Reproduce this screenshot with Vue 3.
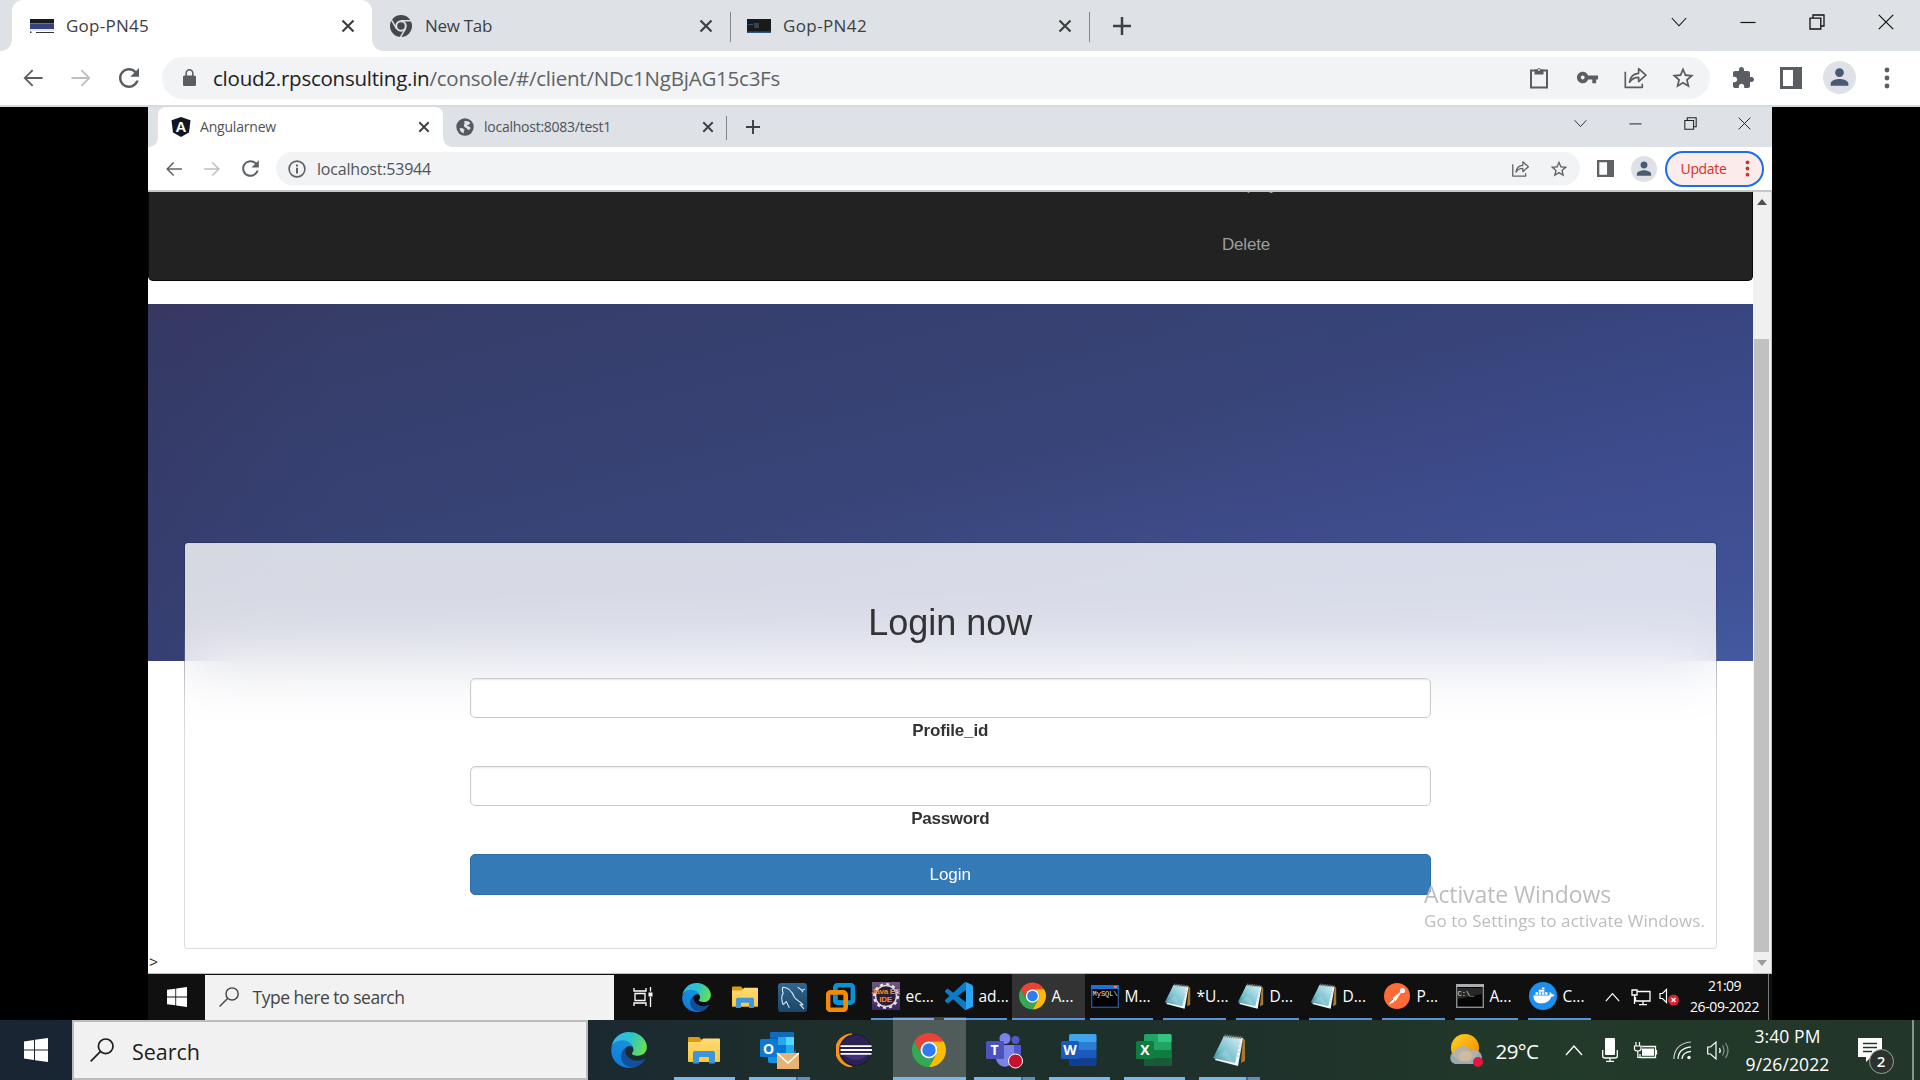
<script setup>
// Adjusts tracking so that a label fills the given width in pixels.
const vFit = {
  mounted(el, { value }) {
    const width = el.getBoundingClientRect().width
    el.style.letterSpacing = `${(value - width) / el.textContent.length}px`
  },
}

const pinned = [
  { icon: 'edge', size: 36 },
  { icon: 'folder', size: 32, run: true },
  { icon: 'outlook', size: 39, run: true, stack: true, letter: 'O' },
  { icon: 'eclipse', size: 36 },
  { icon: 'chrome', size: 34, active: true },
  { icon: 'teams', size: 37, run: true, stack: true, letter: 'T' },
  { icon: 'word', size: 36, run: true, letter: 'W' },
  { icon: 'excel', size: 36, run: true, letter: 'X' },
  { icon: 'notepad', size: 34, run: true, stack: true },
]

const remotePinned = ['edge', 'folder', 'mysql', 'vmware']

const remoteTasks = [
  { icon: 'javaee', label: 'ec...', lines: ['Java EE', 'IDE'] },
  { icon: 'vscode', label: 'ad...' },
  { icon: 'chrome', label: 'A...', active: true },
  { icon: 'mysqlcmd', label: 'M...', lines: ['MySQL\\'] },
  { icon: 'notepad', label: '*U...' },
  { icon: 'notepad', label: 'D...' },
  { icon: 'notepad', label: 'D...' },
  { icon: 'postman', label: 'P...' },
  { icon: 'cmd', label: 'A...', lines: ['C:\\_'] },
  { icon: 'docker', label: 'C...' },
]
</script>

<template>
  <div class="screen">
    <svg class="defs" width="0" height="0" aria-hidden="true">
      <defs>
        <linearGradient id="gEdgeA" x1="0" y1="0.3" x2="1" y2="0.6"><stop offset="0" stop-color="#35b8f2" /><stop offset=".5" stop-color="#2cc3c9" /><stop offset="1" stop-color="#6be24a" /></linearGradient>
        <linearGradient id="gEdgeB" x1="0.6" y1="0" x2="0.3" y2="1"><stop offset="0" stop-color="#1b8fe0" /><stop offset="1" stop-color="#0f7bd8" /></linearGradient>
        <linearGradient id="gPad" x1="0" y1="1" x2="1" y2="0"><stop offset="0" stop-color="#1f6d80" /><stop offset=".35" stop-color="#6fbccb" /><stop offset="1" stop-color="#d9f1f5" /></linearGradient>
        <linearGradient id="gFold" x1="0" y1="0" x2="0" y2="1"><stop offset="0" stop-color="#ffdc78" /><stop offset="1" stop-color="#fcc63a" /></linearGradient>
        <linearGradient id="gSun" x1="0" y1="0" x2="1" y2="1"><stop offset="0" stop-color="#ffd21f" /><stop offset="1" stop-color="#f28500" /></linearGradient>
        <linearGradient id="gJava" x1="0" y1="0" x2="0" y2="1"><stop offset="0" stop-color="#6e5876" /><stop offset="1" stop-color="#3d2465" /></linearGradient>
        <linearGradient id="gSql" x1="0" y1="0" x2="0" y2="1"><stop offset="0" stop-color="#2f668f" /><stop offset="1" stop-color="#1c4668" /></linearGradient>
      </defs>
      <symbol id="back" viewBox="0 0 24 24"><path d="M21.500 11.100H6l6.300-6.300L11 3.500 2.500 12l8.500 8.500 1.300-1.300L6 12.900h15.500z" /></symbol>
      <symbol id="fwd" viewBox="0 0 24 24"><path d="M2.500 11.100H18l-6.300-6.300L13 3.500l8.500 8.500-8.500 8.500-1.300-1.300 6.300-6.300H2.500z" /></symbol>
      <symbol id="reload" viewBox="0 0 24 24"><path d="M17.650 6.350C16.200 4.900 14.210 4 12 4c-4.420 0-7.990 3.580-7.990 8s3.570 8 7.990 8c3.730 0 6.840-2.550 7.730-6h-2.080c-.82 2.330-3.040 4-5.650 4-3.310 0-6-2.690-6-6s2.690-6 6-6c1.660 0 3.140.69 4.220 1.780L13 11h7V4l-2.350 2.350z" /></symbol>
      <symbol id="star" viewBox="0 0 24 24"><path d="M22 9.240l-7.190-.62L12 2 9.190 8.630 2 9.240l5.460 4.730L5.820 21 12 17.270 18.180 21l-1.630-7.030L22 9.240zM12 15.400l-3.760 2.270 1-4.280-3.320-2.880 4.380-.38L12 6.100l1.710 4.040 4.380.38-3.320 2.880 1 4.280L12 15.400z" /></symbol>
      <symbol id="share" viewBox="0 0 24 24"><path d="M2.200 6.500V21.500H18.500V18M6.300 16.500C7 11 10 8.300 15 8V3.500L22 9.800L15 16V11.800C11 11.800 8.500 13 6.300 16.500z" fill="none" stroke="currentColor" stroke-width="1.600" stroke-linejoin="round" /></symbol>
      <symbol id="panel" viewBox="0 0 22 22"><path d="M0 0H22V22H0zM3 3V19H13V3z" fill-rule="evenodd" /></symbol>
      <symbol id="person" viewBox="0 0 24 24"><path d="M12 11.500c2.400 0 4.200-1.900 4.200-4.300S14.400 3 12 3 7.800 4.800 7.800 7.200 9.600 11.500 12 11.500zm0 2c-2.800 0-8.500 1.400-8.500 4.300V20h17v-2.200c0-2.900-5.700-4.300-8.500-4.300z" /></symbol>
      <symbol id="cross" viewBox="0 0 14 14"><path d="M1.500 1.500L12.500 12.500M12.500 1.500L1.500 12.500" stroke="currentColor" stroke-width="2.200" /></symbol>
      <symbol id="plus" viewBox="0 0 18 18"><path d="M9 0V18M0 9H18" stroke="currentColor" stroke-width="2.500" /></symbol>
      <symbol id="wdown" viewBox="0 0 16 16"><path d="M.8 4L8 11.800 15.200 4" fill="none" stroke="currentColor" stroke-width="1.100" /></symbol>
      <symbol id="wmin" viewBox="0 0 16 16"><path d="M.5 8.500H15.500" stroke="currentColor" stroke-width="1.200" /></symbol>
      <symbol id="wmax" viewBox="0 0 16 16"><path d="M1 4.200H11.800V15H1zM4 4V1H15V12H12" fill="none" stroke="currentColor" stroke-width="1.300" /></symbol>
      <symbol id="wclose" viewBox="0 0 16 16"><path d="M.8 .8L15.200 15.200M15.200 .8L.8 15.200" stroke="currentColor" stroke-width="1.200" /></symbol>
      <symbol id="win" viewBox="0 0 24 24"><path d="M0 3.400L10 2V11.500H0zM11 1.800L24 0V11.500H11zM0 12.500H10V22L0 20.600zM11 12.500H24V24L11 22.200z" fill="#fff" /></symbol>
      <symbol id="find" viewBox="0 0 24 24"><g fill="none" stroke="currentColor" stroke-width="1.700"><circle cx="15.700" cy="8.300" r="7.300" /><path d="M10.300 13.700L.7 23.300" /></g></symbol>
      <symbol id="up" viewBox="0 0 18 12"><path d="M1 11L9 2L17 11" fill="none" stroke="currentColor" stroke-width="1.400" /></symbol>

      <symbol id="edge" viewBox="0 0 256 259">
        <path fill="#114f9b" d="M235.680 195.460a93.730 93.730 0 01-10.540 4.710 101.870 101.870 0 01-35.900 6.460c-47.320 0-88.540-32.550-88.540-74.320A31.480 31.480 0 01117.130 105c-42.800 1.800-53.800 46.400-53.800 72.530 0 73.880 68.090 81.370 82.760 81.370 7.910 0 19.840-2.300 27-4.560l1.310-.44a128.340 128.340 0 0066.600-52.800 4 4 0 00-5.320-5.640z" />
        <path fill="url(#gEdgeB)" d="M105.730 241.420A79.200 79.200 0 0183 220.080 80.720 80.720 0 01117.130 105c3.370-1.600 9-4.410 16.500-4.260a32.400 32.400 0 0125.690 13 31.880 31.880 0 016.360 18.660c0-.21 24.500-79.660-80.130-79.660C41.500 52.700 0 94.500 0 131.100a130.200 130.200 0 0012.100 56 128.200 128.200 0 00156.400 62.400 75.500 75.500 0 01-62.770-8.080z" />
        <path fill="url(#gEdgeA)" d="M152.330 148.860c-.81 1.050-3.300 2.500-3.300 5.660 0 2.610 1.700 5.120 4.720 7.230 14.380 10 41.490 8.680 41.560 8.680a59.560 59.560 0 0030.270-8.350 61.380 61.380 0 0030.430-52.880c.26-22.410-8-37.310-11.340-43.910C223.460 23.840 177.720 0 128 0A128 128 0 000 126.200c.48-36.540 36.800-66.050 80-66.050 3.500 0 23.460.34 42 10.070 16.340 8.580 24.900 18.940 30.850 29.210 6.180 10.670 7.280 24.150 7.280 29.520s-2.740 13.330-7.800 19.910z" />
      </symbol>
      <symbol id="folder" viewBox="0 0 32 32">
        <path d="M0 4Q0 3 1 3H11L14 6V10H0z" fill="#dc9a0c" /><path d="M0 8H12L15 4.500H31Q32 4.500 32 5.500V27Q32 28 31 28H1Q0 28 0 27z" fill="url(#gFold)" />
        <path d="M5 29.500V19Q5 17 7 17H25Q27 17 27 19V29.500H21V23H11V29.500z" fill="#3a96dd" />
      </symbol>
      <symbol id="chrome" viewBox="2 2 44 44">
        <path fill="#ea4335" d="M4.950 13A22 22 0 0143.050 13H24A11 11 0 0014.470 29.500z" />
        <path fill="#fbbc04" d="M43.050 13A22 22 0 0124 46L33.530 29.500A11 11 0 0024 13z" />
        <path fill="#34a853" d="M24 46A22 22 0 014.950 13L14.470 29.500A11 11 0 0033.530 29.500z" />
        <circle cx="24" cy="24" r="11" fill="#fff" /><circle cx="24" cy="24" r="8.700" fill="#2f7cf0" />
      </symbol>
      <symbol id="chromegray" viewBox="2 2 44 44">
        <circle cx="24" cy="24" r="22" fill="#45484c" />
        <path d="M24 13.500H45M14.900 29.200L4.500 11M33.100 29.200L22.500 47" stroke="#dee1e6" stroke-width="3" /><circle cx="24" cy="24" r="11.500" fill="#dee1e6" /><circle cx="24" cy="24" r="7.500" fill="#45484c" />
      </symbol>
      <symbol id="notepad" viewBox="0 0 34 34">
        <path d="M31 5L33 7V28L29 30z" fill="#a87730" /><path d="M12 3L31 5 26 33 3 27z" fill="#f4f8f9" /><path d="M12 3L29 5 23 30 1 25z" fill="url(#gPad)" /><path d="M1 25L14 17 23 30z" fill="#fff" opacity=".18" />
        <path d="M12.500 2.800L30.500 4.800" stroke="#777" stroke-width="3" stroke-dasharray="1.200 1" />
        <path d="M27 11H30M26 15H29.500M25.500 19H28.800M25 23H28" stroke="#b7c5c9" stroke-width=".8" />
      </symbol>
      <symbol id="outlook" viewBox="0 0 39 39">
        <path d="M10 2Q10 1 11 1H33Q34 1 34 2V21L36 18V31H10z" fill="#0f6cbd" /><path d="M10 6H18V14H10z" fill="#0364b8" /><path d="M18 6H26V14H18z" fill="#28a8ea" /><path d="M26 6H34V14H26z" fill="#50d9ff" /><path d="M18 14H26V22H18z" fill="#0078d4" /><path d="M26 14H34V22H26z" fill="#28a8ea" /><path d="M8 22H35V32H10Q8 32 8 30z" fill="#1490df" />
        <rect x="0" y="8" width="18" height="18" rx="1.500" fill="#0f78d4" />
        <rect x="17" y="22" width="22" height="16" fill="#e8b273" /><path d="M17 22L28 32 39 22" fill="none" stroke="#fff" stroke-width="1.600" />
      </symbol>
      <symbol id="eclipse" viewBox="0 0 36 36">
        <path d="M16 2A16.500 16.500 0 0016 34.500 16 16 0 0116 2z" fill="#f7941e" stroke="#f7941e" stroke-width="1.200" /><circle cx="20" cy="18" r="15.500" fill="#2c2255" stroke="#111" stroke-width=".6" />
        <path d="M9 23H31A12 8 0 019 23z" fill="#4a3a8c" opacity=".7" /><path d="M4.500 14.200H35.500M4.500 18H36M4.500 21.800H35.500" stroke="#fff" stroke-width="1.800" />
      </symbol>
      <symbol id="teams" viewBox="0 0 37 37">
        <circle cx="19" cy="6.500" r="5.500" fill="#7b83eb" /><circle cx="29.500" cy="8" r="4" fill="#5059c9" /><path d="M25 13H35V24A5 5 0 0125 27z" fill="#5059c9" /><path d="M10 13H28V24A9 9 0 0110 27z" fill="#7b83eb" />
        <rect y="9" width="18" height="18" rx="1.500" fill="#4b53bc" />
        <circle cx="29.500" cy="29" r="7" fill="#c4122f" stroke="#fff" stroke-width="1" />
      </symbol>
      <symbol id="word" viewBox="0 0 36 36">
        <path d="M8 9V3.500Q8 2 9.500 2H34Q35.500 2 35.500 3.500V10H8z" fill="#41a5ee" /><path d="M8 10H35.500V18H8z" fill="#2b7cd3" /><path d="M8 18H35.500V26H8z" fill="#185abd" /><path d="M8 26H35.500V32.500Q35.500 34 34 34H9.500Q8 34 8 32.500z" fill="#103f91" />
        <rect y="9" width="18" height="18" rx="1.500" fill="#185abd" />
      </symbol>
      <symbol id="excel" viewBox="0 0 36 36">
        <rect x="8" y="2" width="27.500" height="32" rx="1.500" fill="#21a366" /><path d="M22 2H34Q35.500 2 35.500 3.500V10H22z" fill="#33c481" /><path d="M8 18H22V26H8z" fill="#107c41" /><path d="M22 18H35.500V26H22z" fill="#107c41" /><path d="M8 26H35.500V32.500Q35.500 34 34 34H9.500Q8 34 8 32.500z" fill="#185c37" />
        <rect y="9" width="18" height="18" rx="1.500" fill="#107c41" />
      </symbol>
      <symbol id="mysql" viewBox="0 0 28 28"><rect width="28" height="28" rx="3" fill="url(#gSql)" /><path d="M5 21C3 16 3.500 12 5 10 4 7 4 5 5 4 11 4 14 9 16 14 18 17 22 18 24 21L21.500 21 25 25M5 21L8 18 11 24M19 4L23 7 26 6M23 7L24 9" fill="none" stroke="#e8f0f5" stroke-width="1" /></symbol>
      <symbol id="vmware" viewBox="0 0 28 28"><rect x="9" y="2" width="17" height="17" rx="2.500" fill="none" stroke="#0a93d4" stroke-width="4.500" /><rect x="2" y="9" width="17" height="17" rx="2.500" fill="none" stroke="#f38b00" stroke-width="4.500" /><path d="M9 12V16.500Q9 19 11.500 19H16" fill="none" stroke="#0a93d4" stroke-width="4.500" /></symbol>
      <symbol id="javaee" viewBox="0 0 28 28"><rect width="28" height="28" fill="url(#gJava)" /><circle cx="14" cy="14" r="11.500" fill="none" stroke="#e6e3ea" stroke-width="3" stroke-dasharray="3 3" /><circle cx="14" cy="14" r="10.500" fill="#2b1d33" stroke="#d8d3dd" stroke-width="1.500" /></symbol>
      <symbol id="vscode" viewBox="0 0 24 24"><path fill="#0a7bc4" d="M23.150 2.587L18.210.21a1.494 1.494 0 0 0-1.705.29l-9.460 8.630-4.120-3.128a.999.999 0 0 0-1.276.057L.327 7.261A1 1 0 0 0 .326 8.740L3.899 12 .326 15.260a1 1 0 0 0 .001 1.479L1.650 17.940a.999.999 0 0 0 1.276.057l4.120-3.128 9.460 8.630a1.492 1.492 0 0 0 1.704.29l4.942-2.377A1.500 1.500 0 0 0 24 20.060V3.939a1.500 1.500 0 0 0-.85-1.352zm-5.146 14.861L10.826 12l7.178-5.448v10.896z" /><path d="M18 .2L23.150 2.600Q24 3 24 3.940V20.060Q24 21 23.150 21.400L18 23.800z" fill="#2aa5f2" /></symbol>
      <symbol id="mysqlcmd" viewBox="0 0 28 28"><rect x=".7" y="3.700" width="26.600" height="21.600" fill="#000" stroke="#23509a" stroke-width="1.400" /><path d="M0 3H28V7H0z" fill="#1d72d8" /><path d="M23 4H26V6H23z" fill="#e37b70" /></symbol>
      <symbol id="postman" viewBox="0 0 28 28"><circle cx="14" cy="14" r="13" fill="#ff6c37" /><circle cx="19.500" cy="8.500" r="2.600" fill="#fff" /><path d="M18 10L10 16 12.500 18.500zM11 17L6 22 11 19.500z" fill="#fff" stroke="#fff" stroke-width="1" /></symbol>
      <symbol id="cmd" viewBox="0 0 28 28"><rect x=".7" y="2.700" width="26.600" height="22.600" fill="#050505" stroke="#8b8f91" stroke-width="1.400" /><path d="M0 2H28V5H0z" fill="#a9adaf" /><path d="M2 6H26V12L2 17z" fill="#fff" opacity=".14" /></symbol>
      <symbol id="docker" viewBox="0 0 28 28"><circle cx="14" cy="14" r="14" fill="#1d8fee" /><path d="M4.500 13.500H19.500C20.500 13.500 21 11.500 20.500 10.200 22 10.500 22.700 11.500 22.800 12.300 24 12 25 12.300 25.500 12.700 25 14.300 23.500 14.800 22.300 14.700 20.500 19.500 17 21.300 12 21.300 6.500 21.300 4.300 18 4.500 13.500z" fill="#fff" /><path d="M6.500 10.300H9V12.700H6.500zM9.700 10.300H12.200V12.700H9.700zM12.900 10.300H15.400V12.700H12.900zM16.100 10.300H18.600V12.700H16.100zM9.700 7.700H15.400V9.700H9.700zM12.900 5.500H15.400V7.200H12.900z" fill="#fff" /></symbol>
    </svg>

    <!-- Outer browser -->
    <div class="tabs">
      <div class="tab tab-on">
        <svg class="fav" width="24" height="14" viewBox="0 0 24 14"><path d="M0 0H24V4H0z" fill="#191a1c" /><path d="M0 4H24V5H0z" fill="#6d7184" /><path d="M0 5H24V10H0z" fill="#36427c" /><path d="M0 10H24V12H0z" fill="#e4e6ee" /><path d="M0 12.500H1.500V14H0zM6 13H24V14H6z" fill="#333" /></svg>
        <span class="tab-t"><span v-fit="83">Gop-PN45</span></span>
        <svg class="x" width="14" height="14"><use href="#cross" /></svg>
      </div>
      <div class="tab tab-two">
        <svg width="22" height="22"><use href="#chromegray" /></svg>
        <span class="tab-t new"><span v-fit="67">New Tab</span></span>
        <svg class="x" width="14" height="14"><use href="#cross" /></svg>
      </div>
      <div class="tab tab-three">
        <svg class="fav" width="24" height="14" viewBox="0 0 24 14"><path d="M0 0H24V14H0z" fill="#191a1c" /><path d="M1 5H6V6H1z" fill="#24567f" /><path d="M7 4H12V9H7z" fill="#3d414c" /><path d="M0 12.500H24V14H0z" fill="#2d5a7c" /></svg>
        <span class="tab-t"><span v-fit="84">Gop-PN42</span></span>
        <svg class="x" width="14" height="14"><use href="#cross" /></svg>
      </div>
      <svg class="plus" width="18" height="18"><use href="#plus" /></svg>
      <div class="wins">
        <svg v-for="w in ['wdown', 'wmin', 'wmax', 'wclose']" :key="w" width="16" height="16"><use :href="'#' + w" /></svg>
      </div>
    </div>

    <div class="bar">
      <div class="slot"><svg width="24" height="24"><use href="#back" /></svg></div>
      <div class="slot dim"><svg width="24" height="24"><use href="#fwd" /></svg></div>
      <div class="slot"><svg width="30" height="30"><use href="#reload" /></svg></div>
      <div class="omni">
        <svg class="lock" width="13" height="17" viewBox="4 1 16 21" preserveAspectRatio="none"><path d="M18 9h-1V6c0-2.760-2.240-5-5-5S7 3.240 7 6v3H6c-1.100 0-2 .9-2 2v9c0 1.100.9 2 2 2h12c1.100 0 2-.9 2-2v-9c0-1.100-.9-2-2-2zM15.100 9H8.900V6c0-1.710 1.390-3.100 3.100-3.100s3.100 1.390 3.100 3.100z" /></svg>
        <span class="url"><span v-fit="567"><b>cloud2.rpsconsulting.in</b>/console/#/client/NDc1NgBjAG15c3Fs</span></span>
        <div class="slot"><svg width="20" height="22" viewBox="0 0 20 22"><path d="M2 3.500H18V20.500H2z" fill="none" stroke="currentColor" stroke-width="2" /><path d="M5.500 2.500H8A2.200 2.200 0 0112 2.500H14.500V7.500H5.500z" /><circle cx="10" cy="3" r=".9" fill="#fff" /></svg></div>
        <div class="slot"><svg width="23" height="23" viewBox="0 0 24 24"><path d="M12.650 10C11.830 7.670 9.610 6 7 6c-3.310 0-6 2.690-6 6s2.690 6 6 6c2.610 0 4.830-1.670 5.650-4H17v4h4v-4h2v-4H12.650zM7 14c-1.100 0-2-.9-2-2s.9-2 2-2 2 .9 2 2-.9 2-2 2z" /></svg></div>
        <div class="slot"><svg width="25" height="25"><use href="#share" /></svg></div>
        <div class="slot"><svg width="26" height="26"><use href="#star" /></svg></div>
      </div>
      <div class="slot ext"><svg width="24" height="24" viewBox="0 0 24 24"><path d="M20.500 11H19V7c0-1.100-.9-2-2-2h-4V3.500C13 2.120 11.880 1 10.500 1S8 2.120 8 3.500V5H4c-1.100 0-1.990.9-1.990 2v3.800H3.500c1.490 0 2.700 1.210 2.700 2.700s-1.210 2.700-2.700 2.700H2V20c0 1.100.9 2 2 2h3.800v-1.500c0-1.490 1.210-2.700 2.700-2.700 1.490 0 2.700 1.210 2.700 2.700V22H17c1.100 0 2-.9 2-2v-4h1.500c1.380 0 2.500-1.120 2.500-2.500S21.880 11 20.500 11z" /></svg></div>
      <div class="slot"><svg width="22" height="22"><use href="#panel" /></svg></div>
      <div class="slot"><span class="face"><svg width="25" height="25"><use href="#person" /></svg></span></div>
      <div class="slot"><svg width="6" height="22" viewBox="0 0 6 22"><circle cx="3" cy="3" r="2.400" /><circle cx="3" cy="11" r="2.400" /><circle cx="3" cy="19" r="2.400" /></svg></div>
    </div>

    <!-- Remote desktop -->
    <main class="stage">
      <div class="remote">
        <div class="rtabs">
          <div class="rtab rtab-on">
            <span class="ng"><svg width="20" height="20" viewBox="0 0 20 20"><path d="M10 0L19.500 3.300 18 15.500 10 20 2 15.500 .5 3.300z" fill="#101722" /><text x="10" y="15" text-anchor="middle" font-family="Liberation Sans, sans-serif" font-weight="700" font-size="15" fill="#fff">A</text></svg></span>
            <span class="rtab-t"><span v-fit="76">Angularnew</span></span>
            <svg class="x" width="12" height="12"><use href="#cross" /></svg>
          </div>
          <div class="rtab rtab-two">
            <svg width="18" height="18" viewBox="0 0 18 18"><circle cx="9" cy="9" r="8.700" fill="#56595d" /><path d="M3.500 10.500C5.500 9.500 7 10 8.200 11.500 9 13 7 13.500 8 15.500 5.500 14.800 3.800 13 3.500 10.500zM8 3.500C11 2.500 13 3.500 14.500 5 13.500 7 11.500 6.500 11 8 13 8 15 9 14.500 10.500 13.500 12.500 11 12 11 10.500 10 9.500 8.500 9.500 8 8 7.500 6.500 9.500 5.500 8 3.500z" fill="#dee1e6" /></svg>
            <span class="rtab-t"><span v-fit="127">localhost:8083/test1</span></span>
            <svg class="x" width="12" height="12"><use href="#cross" /></svg>
          </div>
          <svg class="rplus" width="14" height="14"><use href="#plus" /></svg>
          <div class="rwins">
            <svg v-for="w in ['wdown', 'wmin', 'wmax', 'wclose']" :key="w" width="13" height="13"><use :href="'#' + w" /></svg>
          </div>
        </div>

        <div class="rbar">
          <div class="rslot"><svg width="20" height="20"><use href="#back" /></svg></div>
          <div class="rslot dim"><svg width="20" height="20"><use href="#fwd" /></svg></div>
          <div class="rslot"><svg width="25" height="25"><use href="#reload" /></svg></div>
          <div class="romni">
            <svg width="18" height="18" viewBox="0 0 18 18"><circle cx="9" cy="9" r="7.900" fill="none" stroke="currentColor" stroke-width="1.600" /><path d="M8 7.800H10V13.500H8zM8 4.500H10V6.400H8z" /></svg>
            <span class="rurl"><span v-fit="114">localhost:53944</span></span>
            <div class="rslot"><svg width="19" height="19"><use href="#share" /></svg></div>
            <div class="rslot"><svg width="20" height="20"><use href="#star" /></svg></div>
          </div>
          <div class="rslot rfirst"><svg width="17" height="17"><use href="#panel" /></svg></div>
          <div class="rslot"><span class="face small"><svg width="20" height="20"><use href="#person" /></svg></span></div>
          <div class="update"><span v-fit="46">Update</span><svg width="5" height="17" viewBox="0 0 5 17"><circle cx="2.500" cy="2.300" r="1.900" /><circle cx="2.500" cy="8.500" r="1.900" /><circle cx="2.500" cy="14.700" r="1.900" /></svg></div>
        </div>

        <div class="view">
          <div class="page">
            <nav class="nav"><a>Display</a><a><span v-fit="48">Delete</span></a></nav>
            <div class="hero"></div>
            <section class="card">
              <h2>Login now</h2>
              <div class="field"></div>
              <label><span v-fit="76">Profile_id</span></label>
              <div class="field"></div>
              <label><span v-fit="78">Password</span></label>
              <button>Login</button>
            </section>
            <span class="gt">&gt;</span>
          </div>
          <div class="scroll">
            <svg width="10" height="6" viewBox="0 0 10 6"><path d="M0 6L5 0 10 6z" fill="#505050" /></svg>
            <div class="thumb"></div>
            <svg class="dn" width="10" height="6" viewBox="0 0 10 6"><path d="M0 0L5 6 10 0z" fill="#9c9c9c" /></svg>
          </div>
          <div class="mark">
            <p class="m1"><span v-fit="187">Activate Windows</span></p>
            <p class="m2"><span v-fit="281">Go to Settings to activate Windows.</span></p>
          </div>
        </div>

        <div class="rtask">
          <div class="rstart"><svg width="20" height="20"><use href="#win" /></svg></div>
          <div class="rsearch"><svg width="20" height="20"><use href="#find" /></svg><span v-fit="152">Type here to search</span></div>
          <div class="rview"><svg width="20" height="20" viewBox="0 0 20 20"><path d="M1 1V4H13V1M1 19V16H13V19M2 6.500H12V13.500H2zM17.500 0V4.500M17.500 10V20" fill="none" stroke="#fff" stroke-width="1.300" /><path d="M15.500 5.500H19.500V9.500H15.500z" fill="#fff" /></svg></div>
          <div v-for="i in remotePinned" :key="i" class="rpin"><svg :width="i === 'folder' ? 26 : 29" :height="i === 'folder' ? 26 : 29"><use :href="'#' + i" /></svg></div>
          <div class="rruns">
            <div v-for="(t, n) in remoteTasks" :key="n" class="rrun" :class="{ on: t.active }">
              <div class="rin">
                <div class="ico" :class="t.icon">
                  <svg :width="t.icon === 'chrome' || t.icon === 'notepad' ? 27 : 28" height="28"><use :href="'#' + t.icon" /></svg>
                  <div v-if="t.lines" class="mini"><i v-for="l in t.lines" :key="l">{{ l }}</i></div>
                </div>
                <span>{{ t.label }}</span>
              </div>
            </div>
          </div>
          <div class="rtray">
            <svg width="15" height="10"><use href="#up" /></svg>
            <svg width="20" height="17" viewBox="0 0 20 17"><path d="M6 2.500H19V12H4.500V8M12 12V15.500M8 15.700H16M1 1H6V6H1zM3.500 6V15" fill="none" stroke="#fff" stroke-width="1.300" /></svg>
            <svg width="20" height="18" viewBox="0 0 20 18"><path d="M1 5.500H3.500L7.500 1.500V14.500L3.500 10.500H1z" fill="none" stroke="#fff" stroke-width="1.200" /><circle cx="14.500" cy="12" r="5.500" fill="#d9232e" /><path d="M12.500 10L16.500 14M16.500 10L12.500 14" stroke="#fff" stroke-width="1.400" /></svg>
            <div class="rclock"><span v-fit="33">21:09</span><span v-fit="69">26-09-2022</span></div>
          </div>
        </div>
      </div>
    </main>

    <!-- Host taskbar -->
    <footer class="task">
      <div class="start"><svg width="24" height="24"><use href="#win" /></svg></div>
      <div class="search"><svg width="24" height="24"><use href="#find" /></svg><span v-fit="68">Search</span></div>
      <div class="pins">
        <div v-for="p in pinned" :key="p.icon" class="pin" :class="{ run: p.run, stack: p.stack, on: p.active }">
          <div class="ico">
            <svg :width="p.size" :height="p.size"><use :href="'#' + p.icon" /></svg>
            <b v-if="p.letter" class="letter">{{ p.letter }}</b>
          </div>
        </div>
      </div>
      <div class="tray">
        <svg class="sun" width="36" height="34" viewBox="0 0 36 34"><circle cx="17" cy="15" r="14" fill="url(#gSun)" /><path d="M7 31A6.500 6.500 0 017 18.500 9 9 0 0123 18 7 7 0 0130 31z" fill="#a9b4c0" opacity=".9" /><path d="M10 23A8 8 0 0124 21 6 6 0 0120 28H12z" fill="#e6c092" opacity=".6" /><circle cx="30" cy="29" r="5" fill="#e3173e" /></svg>
        <span class="deg"><span v-fit="43">29°C</span></span>
        <svg class="up" width="18" height="12"><use href="#up" /></svg>
        <svg class="mic" width="16" height="24" viewBox="0 0 16 24"><rect x="3" y="0" width="10" height="17" rx="1" fill="#fff" /><path d="M.7 12V18Q.7 20 3 20H13Q15.300 20 15.300 18V12M8 20V23M4 23.300H12" fill="none" stroke="#fff" stroke-width="1.300" /></svg>
        <svg class="bat" width="24" height="17" viewBox="0 0 24 17"><path d="M8 4.500H21.500V15.500H6V12M22.500 8V12.500" fill="none" stroke="#fff" stroke-width="1.300" /><path d="M8 6.500H20V13.800H8z" fill="#fff" /><path d="M.5 4H7V7.500Q6.500 9 3.800 9 1 9 .5 7.500zM2 4V0M5.500 4V0M3.800 9V15.500H6" fill="none" stroke="#fff" stroke-width="1.200" /></svg>
        <svg class="wifi" width="19" height="19" viewBox="0 0 19 19"><g fill="none" stroke="#fff" stroke-width="1.200"><path d="M.8 18Q1.500 2.500 18 1" opacity=".75" /><path d="M5 18Q5.500 7 18 5.800" /><path d="M9 18Q9.500 11 18 10.300" /></g><circle cx="16" cy="16.500" r="1.700" fill="#fff" /></svg>
        <svg class="vol" width="23" height="19" viewBox="0 0 23 19"><path d="M.7 6H3.500L9 1V18L3.500 13H.7z" fill="none" stroke="#fff" stroke-width="1.200" /><path d="M12.500 7Q14 9.500 12.500 12" fill="none" stroke="#fff" stroke-width="1.200" /><path d="M15.500 4.500Q18.500 9.500 15.500 14.500M18.500 2Q23.500 9.500 18.500 17" fill="none" stroke="#fff" stroke-width="1.200" opacity=".45" /></svg>
        <div class="clock"><span v-fit="66">3:40 PM</span><span v-fit="84">9/26/2022</span></div>
        <div class="note"><svg width="24" height="24" viewBox="0 0 24 24"><path d="M0 0H24V19H13L8 24V19H0z" fill="#fff" /><path d="M5 5.500H19M5 9.500H19M5 13.500H14" stroke="#223629" stroke-width="1.300" /></svg><span class="num">2</span></div>
        <div class="peek"></div>
      </div>
    </footer>
  </div>
</template>

<style>
body { margin: 0; background: #000; }
</style>

<style scoped>
* { box-sizing: border-box; }
.screen { width: 1920px; height: 1080px; overflow: hidden; display: flex; flex-direction: column; font-family: "Open Sans", "Noto Sans", sans-serif; background: #000; }
.defs { position: absolute; }
svg { display: block; flex: none; fill: currentColor; overflow: visible; }
span { white-space: nowrap; }

.tabs { height: 51px; flex: none; background: #dee1e6; display: flex; align-items: center; color: #3c4043; padding-left: 12px; }
.tab { height: 51px; display: flex; align-items: center; flex: none; position: relative; }
.tab-t { font-size: 17px; margin-left: 12px; line-height: 50px; flex: 1; }
.tab-t.new { margin-left: 13px; }
.tab-on { width: 360px; padding: 0 17px 0 18px; background: #fff; border-radius: 11px 11px 0 0; }
.tab-on::before, .tab-on::after { content: ""; position: absolute; bottom: 0; width: 11px; height: 11px; }
.tab-on::before { left: -11px; background: radial-gradient(circle at 0 0, transparent 10.500px, #fff 11px); }
.tab-on::after { right: -11px; background: radial-gradient(circle at 100% 0, transparent 10.500px, #fff 11px); }
.tab-two { width: 359px; padding: 0 18px 0 18px; }
.tab-three { width: 359px; padding: 0 18px 0 16px; }
.tab-two::after, .tab-three::after { content: ""; position: absolute; right: 0; top: 12px; width: 1px; height: 30px; background: #84878b; }
.fav { margin-top: 1px; }
.plus { margin-left: 23px; }
.wins { margin-left: auto; align-self: flex-start; height: 43px; display: flex; align-items: center; color: #111; }
.wins svg { margin: 0 26.500px; }

.bar { height: 56px; flex: none; display: flex; align-items: center; padding: 0 9px 1px; background: #fff; border-bottom: 2px solid #d9dadc; color: #5a5d61; }
.slot { width: 48px; flex: none; display: flex; justify-content: center; align-items: center; }
.dim { color: #bcbec0; }
.omni { flex: 1; height: 42px; margin-left: 9px; padding: 0 3px 0 20.500px; border-radius: 21px; background: #f1f3f4; display: flex; align-items: center; }
.url { flex: 1; margin-left: 17.500px; font-size: 20.500px; line-height: 40px; color: #5f6368; }
.url b { font-weight: 400; color: #202124; }
.ext { margin-left: 9px; }
.face { width: 33px; height: 33px; border-radius: 50%; background: #dee1e6; color: #4a5a70; display: flex; align-items: center; justify-content: center; }
.face.small { width: 26px; height: 26px; }

.stage { flex: 1; min-height: 0; display: flex; padding-left: 148px; background: #000; }
.remote { width: 1623.500px; display: flex; flex-direction: column; background: #fff; }
.rtabs { height: 40px; flex: none; display: flex; align-items: center; background: #dee1e6; color: #3c4043; padding-left: 10px; }
.rtab { height: 40px; flex: none; display: flex; align-items: center; position: relative; }
.rtab-on { width: 285px; padding: 0 13px 0 13px; background: #fff; border-radius: 8px 8px 0 0; }
.rtab-on::before, .rtab-on::after { content: ""; position: absolute; bottom: 0; width: 9px; height: 9px; }
.rtab-on::before { left: -9px; background: radial-gradient(circle at 0 0, transparent 8.500px, #fff 9px); }
.rtab-on::after { right: -9px; background: radial-gradient(circle at 100% 0, transparent 8.500px, #fff 9px); }
.rtab-two { width: 284px; padding: 0 13px 0 13px; }
.rtab-two::after { content: ""; position: absolute; right: 0; top: 9px; width: 1px; height: 24px; background: #84878b; }
.rtab-t { flex: 1; margin-left: 9px; font-size: 14px; line-height: 38px; color: #505357; }
.rtab-two .rtab-t { margin-left: 10px; }
.rplus { margin-left: 19px; }
.rwins { margin-left: auto; height: 33px; align-self: flex-start; display: flex; align-items: center; color: #222; }
.rwins svg { margin: 0 20.400px 0 21.200px; }
.rbar { height: 45px; flex: none; display: flex; align-items: center; padding: 0 8px 0 7px; color: #5f6368; border-bottom: 2px solid #c6c7c9; }
.rslot { width: 38px; flex: none; display: flex; justify-content: center; }
.romni { flex: 1; height: 33px; margin-left: 7px; padding: 0 2px 0 12px; border-radius: 17px; background: #f1f3f4; display: flex; align-items: center; }
.rurl { flex: 1; margin-left: 11px; font-size: 16px; line-height: 32px; color: #505357; }
.rfirst { margin-left: 7px; }
.update { width: 99px; height: 36px; margin-left: 2px; padding: 0 12px 0 14px; border: 2.500px solid #1a6fe8; border-radius: 18px; background: #fbeceb; color: #d93025; font-size: 14px; display: flex; align-items: center; justify-content: space-between; }

.view { flex: 1; min-height: 0; display: flex; position: relative; }
.page { width: 1605px; flex: none; background: #fff; font-family: "Liberation Sans", Arial, sans-serif; position: relative; display: flex; flex-direction: column; }
.nav { height: 89px; flex: none; overflow: hidden; display: flex; flex-direction: column; justify-content: flex-end; padding: 0 0 5px 1073px; background: #222; border: 1px solid #080808; border-top: 0; border-radius: 0 0 5px 5px; color: #9d9d9d; font-size: 17px; line-height: 60px; }
.nav a { flex: none; height: 60px; }
.hero { height: 357px; flex: none; margin-top: 23px; background: linear-gradient(90deg, rgba(48, 44, 88, .2) 0, transparent 12%, transparent 62%, rgba(46, 66, 150, .15) 100%), linear-gradient(166deg, #363b64 0%, #36406f 22%, #384478 48%, #3e4c8a 68%, #435495 88%, #485da3 100%); }
.card { width: 1533.500px; height: 407px; flex: none; margin: -119px 0 0 35.500px; display: flex; flex-direction: column; align-items: center; border: 1px solid rgba(0, 0, 0, .14); border-radius: 4px; background: rgba(255, 255, 255, .8); backdrop-filter: blur(32px); background-clip: padding-box; color: #333; font-size: 17px; }
h2 { margin: 60px 0 35px; font-size: 36px; line-height: 40px; font-weight: 400; }
.field { width: 961px; height: 40px; flex: none; background: #fff; border: 1.500px solid #ccc; border-radius: 5px; box-shadow: inset 0 1px 2px rgba(0, 0, 0, .1); }
label { height: 24px; margin-bottom: 24px; line-height: 26px; font-weight: 700; }
button { width: 961px; height: 41px; padding: 0; border: 1px solid #2e6da4; border-radius: 5px; background: #337ab7; color: #fff; font: 17px "Liberation Sans", Arial, sans-serif; }
.gt { font-size: 15px; line-height: 17px; margin: 4px 0 0 1px; color: #333; }
.scroll { width: 18.500px; flex: none; background: #f0f0f0; border-right: 1px solid #c4c4c4; display: flex; flex-direction: column; align-items: center; }
.scroll svg { margin-top: 7px; }
.thumb { width: 15px; height: 613px; margin-top: 134px; background: #c1c1c1; }
.scroll .dn { margin-top: 8px; }
.mark { position: absolute; left: 1276px; top: 686px; color: #bdbdbd; }
.mark p { margin: 0; }
.m1 { font-size: 23px; line-height: 32px; }
.m2 { font-size: 17px; line-height: 22px; }

.rtask { height: 47px; flex: none; display: flex; align-items: center; background: #101010; color: #fff; border-top: 1px solid #c0c0c0; }
.rstart { width: 57px; flex: none; display: flex; justify-content: center; }
.rsearch { width: 409px; height: 45px; flex: none; background: #f2f2f2; color: #444; display: flex; align-items: center; padding-left: 14px; font-size: 17.500px; }
.rsearch span { margin-left: 13.500px; }
.rview { width: 57px; flex: none; display: flex; justify-content: center; margin-right: 1.500px; }
.rpin { width: 48px; flex: none; display: flex; justify-content: center; }
.rruns { display: flex; flex: none; margin-left: 1px; }
.rrun { width: 73px; height: 46px; flex: none; display: flex; justify-content: center; }
.rin { width: 63px; padding-left: 1px; height: 46px; display: flex; align-items: center; font-size: 15.500px; border-bottom: 2px solid #5a93d8; }
.rin span { margin-left: 6px; }
.on .rin { width: 73px; padding-left: 7px; background: #333; }
.ico { position: relative; flex: none; }
.mini { position: absolute; inset: 0; display: flex; flex-direction: column; align-items: center; justify-content: center; }
.mini i { font: 400 7px/8px "Liberation Mono", monospace; color: #e4e4e4; white-space: nowrap; }
.javaee .mini i { font: 700 8px/8px "Liberation Sans", sans-serif; letter-spacing: -.3px; color: #f98c28; }
.mysqlcmd .mini, .cmd .mini { align-items: flex-start; padding: 0 0 4px 2px; }
.rtray { flex: 1; display: flex; align-items: center; padding-left: 9px; height: 46px; }
.rtray svg:nth-child(2) { margin-left: 11px; }
.rtray svg:nth-child(3) { margin-left: 8px; }
.rclock { width: 86px; height: 46px; margin-left: auto; padding: 1px 1px 0 0; border-right: 1px solid #777; display: flex; flex-direction: column; align-items: center; font-size: 14px; line-height: 21px; margin-right: 3px; }

.task { height: 60px; flex: none; display: flex; align-items: center; color: #fff; background: linear-gradient(90deg, #192533 0, #1a2931 30%, #1e2f2b 45%, #1f312b 65%, #223a29 82%, #223629 100%); }
.start { width: 72px; flex: none; display: flex; justify-content: center; }
.search { width: 516px; height: 60px; flex: none; display: flex; align-items: center; padding-left: 16px; background: #f1f1f1; border: 2px solid #bcbcbc; color: #1c1c1c; font-size: 21.500px; }
.search span { margin-left: 18px; padding-top: 2px; }
.pins { display: flex; margin-left: 3.500px; }
.pin { width: 75px; height: 60px; display: flex; align-items: center; justify-content: center; position: relative; }
.pin.run::after { content: ""; position: absolute; left: 7px; bottom: 0; width: 61px; height: 3px; background: #76b9ed; }
.pin.stack::after { background: linear-gradient(90deg, #76b9ed 47px, #43688a 47px, #43688a 49px, #5f8fb8 49px); }
.pin.on::before { content: ""; position: absolute; left: 1px; bottom: 0; width: 73px; height: 60px; background: rgba(255, 255, 255, .22); border-bottom: 3px solid #76b9ed; }
.letter { position: absolute; left: 0; top: 9px; width: 18px; font-size: 14px; line-height: 17px; text-align: center; }
.tray { flex: 1; height: 60px; display: flex; align-items: center; }
.sun { margin-left: 181px; }
.deg { margin-left: 12px; width: 43px; font-size: 20.500px; line-height: 60px; padding-top: 2px; }
.up { margin-left: 26px; }
.mic { margin-left: 19px; }
.bat { margin-left: 16px; }
.wifi { margin-left: 15px; }
.vol { margin-left: 15px; }
.clock { width: 100px; margin-left: 8px; display: flex; flex-direction: column; align-items: center; font-size: 17.500px; line-height: 28px; }
.note { margin-left: 20px; position: relative; }
.num { position: absolute; left: 11px; top: 11px; width: 25px; height: 25px; border-radius: 50%; border: 1px solid #98a19b; background: #2c322f; font-size: 15px; font-weight: 600; line-height: 23px; text-align: center; }
.peek { margin-left: auto; margin-right: 6px; width: 2px; height: 60px; background: #87958b; }
</style>
